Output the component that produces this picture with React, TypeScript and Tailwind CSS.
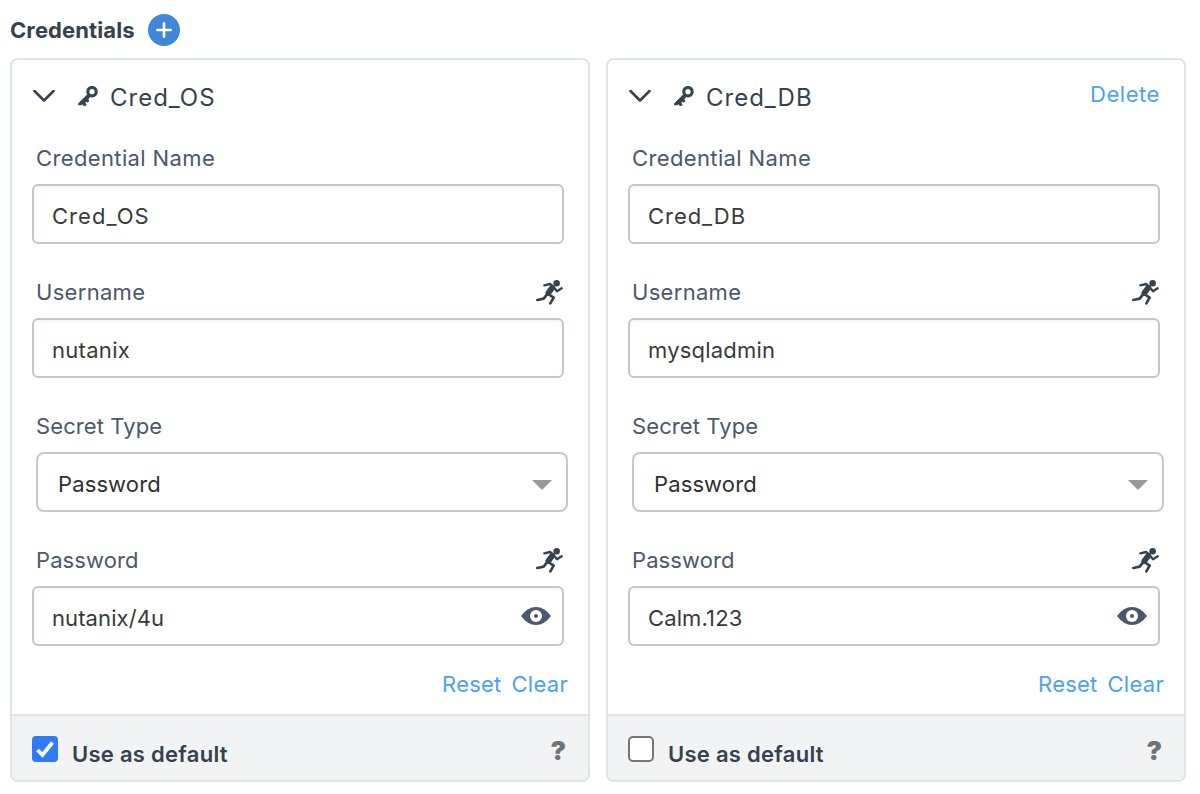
import React from "react";

function KeyIcon() {
  return (
    <svg viewBox="0 0 60 62" className="h-[20.7px] w-5 fill-[#36424e]">
      <circle cx="42" cy="17" r="12.5" fill="none" stroke="#36424e" strokeWidth="9.5" />
      <path d="M28 25L1 52Q-1 56 3 58L10 58L13 55L19 62L26 56L22 50L25 47L29 50L34 45L31 40L37 33Z" />
    </svg>
  );
}

function RunnerIcon() {
  return (
    <svg viewBox="0 0 81 75" className="h-[25px] w-[27px] fill-none stroke-[#36424e]" strokeLinecap="round" strokeLinejoin="round">
      <circle cx="62" cy="10" r="9.8" fill="#36424e" stroke="none" />
      <path d="M25 16L42 12L54 21M53 22L63 34L77 25" strokeWidth="7" />
      <path d="M48 24L37 39" strokeWidth="17" />
      <path d="M37 42L53 53L43 70M33 43L23 56L4 60" strokeWidth="8" />
    </svg>
  );
}

function EyeIcon() {
  return (
    <svg viewBox="0 0 90 54" className="mb-px h-[18px] w-[30px]">
      <path fill="#4c586b" d="M0 27Q20 0 45 0T90 27Q70 54 45 54T0 27Z" />
      <circle cx="45" cy="27" r="18" fill="white" />
      <circle cx="45" cy="27" r="6" fill="#4c586b" />
    </svg>
  );
}

function Label({ text, spacing, runtime }: { text: string; spacing: string; runtime?: boolean }) {
  return (
    <div className="flex h-[50px] items-center justify-between pr-[25px] pb-0.5 pl-6 text-[#4c586b]">
      <span className={spacing}>{text}</span>
      {runtime && <RunnerIcon />}
    </div>
  );
}

function Input({ value, spacing, secret }: { value: string; spacing: string; secret?: boolean }) {
  return (
    <div className="mb-6 ml-5 flex h-[60px] w-[532px] items-center justify-between rounded-[6px] border-2 border-[#c3c7cb] pr-[11px] pl-[18px] text-[#3a3a3a] shadow-[inset_0_2px_2px_rgba(0,0,0,0.04)]">
      <span className={`pt-1 ${spacing}`}>{value}</span>
      {secret && <EyeIcon />}
    </div>
  );
}

type Credential = {
  name: string;
  user: string;
  password: string;
  nameSpacing: string;
  userSpacing: string;
  passwordSpacing: string;
  isDefault: boolean;
  removable: boolean;
};

function Card({ c }: { c: Credential }) {
  return (
    <section className="flex h-[724px] w-[580px] flex-col overflow-hidden rounded-[8px] border-2 border-[#dfe4e4] bg-white">
      <header className="flex h-[74px] items-center pr-6 pl-[21px] text-[#36424e]">
        <svg viewBox="0 0 22 12" className="mb-0.5 h-3 w-[22px] fill-none stroke-[#36424e]" strokeWidth="2.6" strokeLinecap="round" strokeLinejoin="round">
          <path d="M1.5 1L11 10.5L20.5 1" />
        </svg>
        <span className="mb-0.5 ml-[23px]"><KeyIcon /></span>
        <span className="ml-3 pt-0.5 text-[24px] tracking-[1px]">{c.name}</span>
        {c.removable && <a className="ml-auto pb-1.5 tracking-[0.55px] text-[#4ba3ee]">Delete</a>}
      </header>
      <Label text="Credential Name" spacing="tracking-[0.37px]" />
      <Input value={c.name} spacing={c.nameSpacing} />
      <Label text="Username" spacing="tracking-[0.3px]" runtime />
      <Input value={c.user} spacing={c.userSpacing} />
      <Label text="Secret Type" spacing="tracking-[0.1px]" />
      <div className="mb-6 ml-6 flex h-[60px] w-[532px] items-center justify-between rounded-[8px] border-2 border-[#c9c9c9] pr-[14px] pl-5 text-[#303030]">
        <span className="pt-1 tracking-[0.12px]">Password</span>
        <svg viewBox="0 0 20 10" className="mt-1.5 h-2.5 w-5 fill-[#999999]"><path d="M0 0H20L10 10Z" /></svg>
      </div>
      <Label text="Password" spacing="tracking-[0.1px]" runtime />
      <Input value={c.password} spacing={c.passwordSpacing} secret />
      <div className="-mt-6 flex h-[68px] items-center justify-end gap-2.5 pt-2 pr-5 text-[#4ba3ee]">
        <a className="tracking-[0.2px]">Reset</a>
        <a className="tracking-[0.3px]">Clear</a>
      </div>
      <footer className="flex h-[66px] items-center border-t-2 border-[#dfe4e4] bg-[#f2f3f5] pt-0.5 pr-[22px] pl-5">
        {c.isDefault ? (
          <span className="flex size-[26px] items-center justify-center rounded-[4px] bg-[#2f7af6]">
            <svg viewBox="0 0 18 17" className="h-[17px] w-[18px] fill-none stroke-white" strokeWidth="3.8"><path d="M1.5 9L6.5 14L16.5 1.5" /></svg>
          </span>
        ) : (
          <span className="size-[26px] rounded-[5px] border-2 border-[#767676] bg-white" />
        )}
        <span className="ml-3.5 pt-2.5 font-semibold tracking-[0.28px] text-[#36424e]">Use as default</span>
        <span className="ml-auto pt-1 text-[26px] font-black text-[#6c7479]">?</span>
      </footer>
    </section>
  );
}

const credentials: Credential[] = [
  { name: "Cred_OS", user: "nutanix", password: "nutanix/4u", nameSpacing: "tracking-[1.05px]", userSpacing: "tracking-[0.3px]", passwordSpacing: "tracking-[0.1px]", isDefault: true, removable: false },
  { name: "Cred_DB", user: "mysqladmin", password: "Calm.123", nameSpacing: "tracking-[0.95px]", userSpacing: "tracking-[0.2px]", passwordSpacing: "tracking-[0.12px]", isDefault: false, removable: true },
];

export default function App() {
  return (
    <main className="h-[794px] w-[1200px] bg-white px-2.5 font-['Inter',sans-serif] text-[22px] leading-7">
      <div className="flex h-[58px] items-center pt-0.5">
        <h1 className="w-[138px] font-bold tracking-[0.1px] text-[#36424e]">Credentials</h1>
        <button className="flex size-8 items-center justify-center rounded-full bg-[#3f87d9]">
          <svg viewBox="0 0 16 16" className="size-4 stroke-white" strokeWidth="2.6" strokeLinecap="round"><path d="M8 1.3V14.7M1.3 8H14.7" /></svg>
        </button>
      </div>
      <div className="flex gap-4">
        {credentials.map((c) => <Card key={c.name} c={c} />)}
      </div>
    </main>
  );
}
